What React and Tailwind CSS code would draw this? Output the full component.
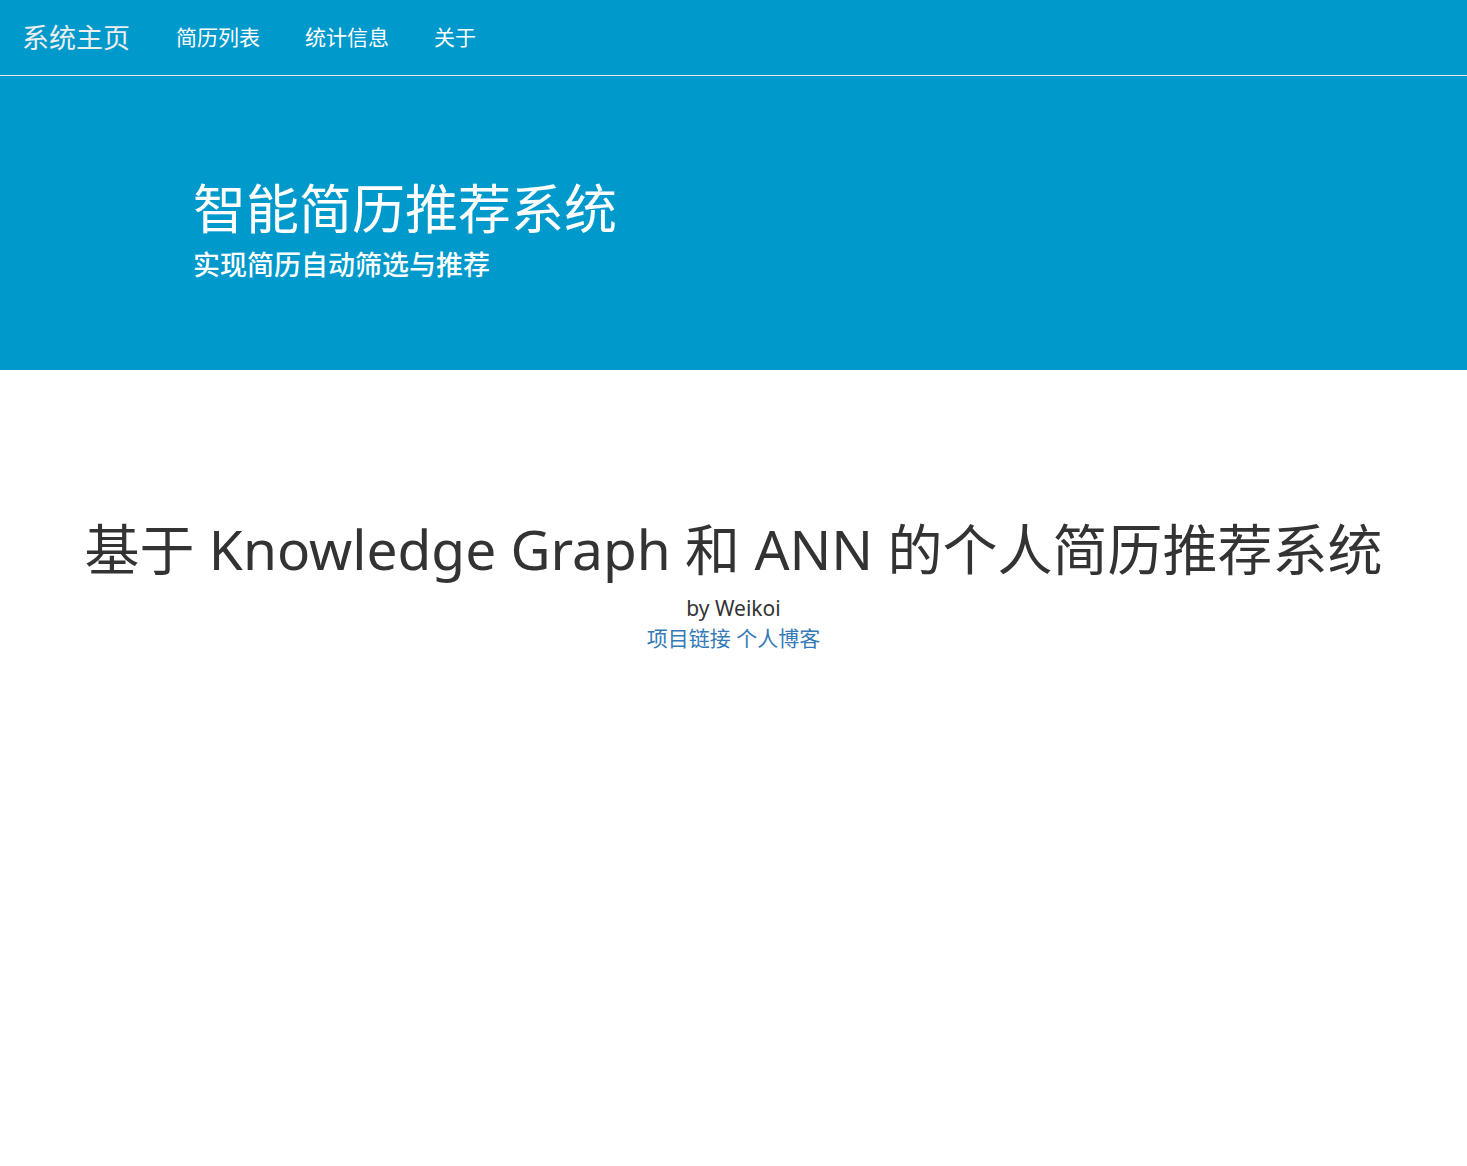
export default function App() {
  const font = { fontFamily: '"Noto Sans", "Noto Sans CJK SC", sans-serif' };
  return (
    <div className="min-h-[1166px] bg-white text-[#333]" style={font}>
      {/* Navbar */}
      <nav className="h-[76px] bg-[#0099cc] border-b border-[#e7e7e7] flex items-center">
        <a className="pl-[22px] pr-[46px] text-[27px] leading-none text-[#eeeeee]">系统主页</a>
        <ul className="flex items-center gap-[45px] text-[21px] leading-none text-white">
          <li>简历列表</li>
          <li>统计信息</li>
          <li>关于</li>
        </ul>
      </nav>

      {/* Jumbotron */}
      <header className="h-[294px] bg-[#0099cc] text-white pl-[193px] pt-[102px]">
        <h1 className="text-[53px] leading-[62px] font-normal">智能简历推荐系统</h1>
        <p className="mt-[7px] text-[27px] leading-[36px] font-medium">实现简历自动筛选与推荐</p>
      </header>

      {/* Main */}
      <main className="flex flex-col items-center pt-[148px]">
        <h2 className="text-[55px] leading-[62px] font-normal text-[#333]">
          基于 Knowledge Graph 和 ANN 的个人简历推荐系统
        </h2>
        <p className="mt-[13px] text-[21px] leading-[30px]">by Weikoi</p>
        <p className="text-[21px] leading-[30px] text-[#337ab7]">
          <a>项目链接</a> <a>个人博客</a>
        </p>
      </main>
    </div>
  );
}
